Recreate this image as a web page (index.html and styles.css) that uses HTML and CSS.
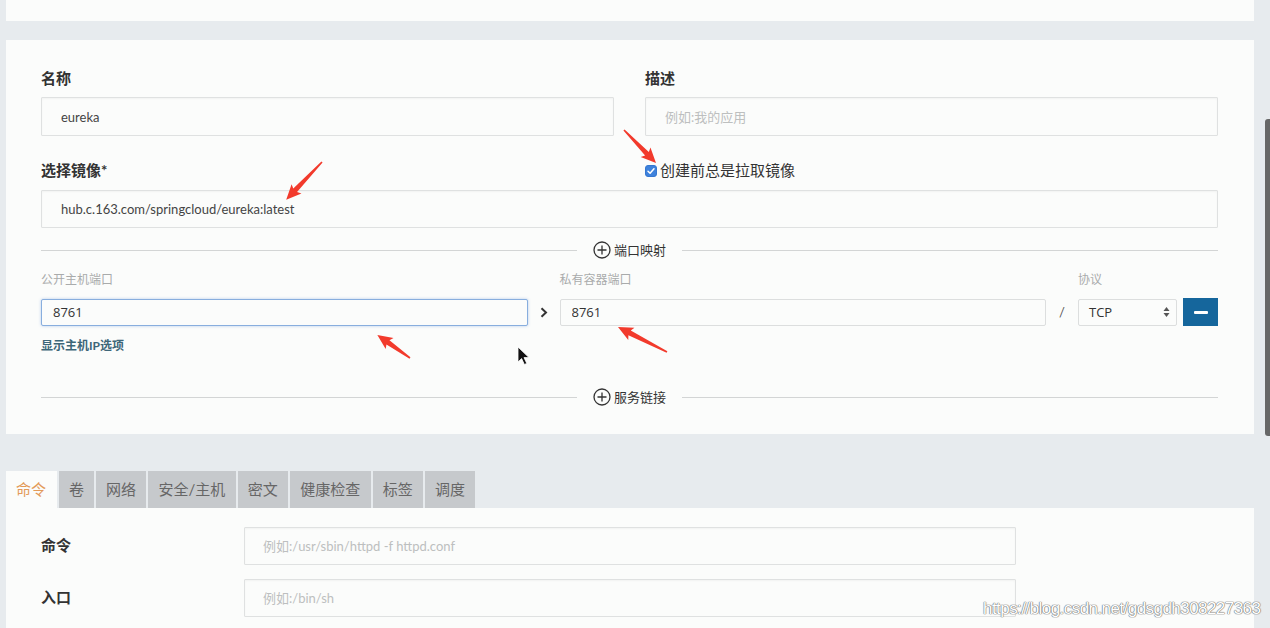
FILE: index.html
```html
<!DOCTYPE html>
<html lang="zh-CN">
<head>
  <meta charset="UTF-8" />
  <title>添加服务</title>
  <link rel="stylesheet" href="styles.css">
</head>
<body>
  <div class="top-card"></div>

  <!-- 基本信息 -->
  <div class="card">
    <div class="row">
      <div>
        <label class="field-label" for="nome">名称</label>
        <input class="text-input" id="nome" type="text" value="eureka">
      </div>
      <div>
        <label class="field-label" for="desc">描述</label>
        <input class="text-input" id="desc" type="text" placeholder="例如:我的应用">
      </div>
    </div>

    <div class="row row-image">
      <label class="field-label" for="imagem">选择镜像*</label>
      <label class="pull">
        <svg class="check" width="12" height="12" viewBox="0 0 12 12">
          <rect x="0.5" y="0.5" width="11" height="11" rx="2.5" fill="#3e82dc" stroke="#3577d0"/>
          <path d="M3 6.2 L5.1 8.3 L9 3.8" fill="none" stroke="#fff" stroke-width="1.5" stroke-linecap="round" stroke-linejoin="round"/>
        </svg>创建前总是拉取镜像
      </label>
    </div>
    <input class="text-input image-input" id="imagem" type="text" value="hub.c.163.com/springcloud/eureka:latest">

    <div class="divider">
      <span class="line"></span>
      <span class="divider-label">
        <svg width="18" height="18" viewBox="0 0 18 18">
          <circle cx="9" cy="9" r="8" fill="none" stroke="#333" stroke-width="1.3"/>
          <path d="M9 4.5 V13.5 M4.5 9 H13.5" stroke="#333" stroke-width="1.3"/>
        </svg>端口映射
      </span>
      <span class="line"></span>
    </div>

    <div class="ports">
      <span class="port-label">公开主机端口</span>
      <span></span>
      <span class="port-label">私有容器端口</span>
      <span></span>
      <span class="port-label">协议</span>
      <span></span>

      <input class="port-input focused" type="text" value="8761">
      <span class="sep">
        <svg width="8" height="11" viewBox="0 0 8 11"><path d="M1.5 1.2 L6 5.5 L1.5 9.8" fill="none" stroke="#333" stroke-width="2"/></svg>
      </span>
      <input class="port-input" type="text" value="8761">
      <span class="sep slash">/</span>
      <div class="select">
        <span>TCP</span>
        <svg width="7" height="12" viewBox="0 0 7 12">
          <path d="M3.5 1 L6.5 5 H0.5 Z M3.5 11 L6.5 7 H0.5 Z" fill="#555"/>
        </svg>
      </div>
      <button class="remove"><span></span></button>
    </div>

    <a class="host-ip" href="#">显示主机IP选项</a>

    <div class="divider divider-service">
      <span class="line"></span>
      <span class="divider-label">
        <svg width="18" height="18" viewBox="0 0 18 18">
          <circle cx="9" cy="9" r="8" fill="none" stroke="#333" stroke-width="1.3"/>
          <path d="M9 4.5 V13.5 M4.5 9 H13.5" stroke="#333" stroke-width="1.3"/>
        </svg>服务链接
      </span>
      <span class="line"></span>
    </div>
  </div>

  <!-- 标签页 -->
  <div class="tabs">
    <span class="tab active">命令</span>
    <span class="tab">卷</span>
    <span class="tab">网络</span>
    <span class="tab">安全/主机</span>
    <span class="tab">密文</span>
    <span class="tab">健康检查</span>
    <span class="tab">标签</span>
    <span class="tab">调度</span>
  </div>

  <div class="tab-panel">
    <label class="panel-label">命令</label>
    <input class="text-input panel-input" type="text" placeholder="例如:/usr/sbin/httpd -f httpd.conf">
    <label class="panel-label">入口</label>
    <input class="text-input panel-input" type="text" placeholder="例如:/bin/sh">
  </div>

  <div class="scrollbar"></div>

  <!-- 截图标注 -->
  <svg class="notes" width="1270" height="628" viewBox="0 0 1270 628">
    <g fill="#f23a2c">
      <polygon transform="translate(322 162) rotate(133.5)" points="0,-0.8 39,-2.6 37,-6.8 52,0 37,6.8 39,2.6 0,0.8"/>
      <polygon transform="translate(624 130) rotate(45.9)" points="0,-0.8 33,-2.6 31,-6.8 46,0 31,6.8 33,2.6 0,0.8"/>
      <polygon transform="translate(410 358) rotate(-144.7)" points="0,-0.8 27,-2.6 25,-6.8 40,0 25,6.8 27,2.6 0,0.8"/>
      <polygon transform="translate(667 352) rotate(-153)" points="0,-0.8 42,-2.6 40,-6.8 55,0 40,6.8 42,2.6 0,0.8"/>
    </g>
    <path transform="translate(518 347)" d="M0 0 V15 L3.6 11.6 L6.4 17.5 L8.8 16.4 L6 10.6 H11 Z" fill="#111" stroke="#fff" stroke-width="0.8"/>
  </svg>

  <div class="watermark">https://blog.csdn.net/gdsgdh308227363</div>
</body>
</html>
```

FILE: styles.css
```css
html, body { margin: 0; overflow: hidden; }
body {
  font-family: Lato, "Noto Sans CJK SC", sans-serif;
  background: #e7ebee;
  color: #333;
  padding: 0 16px 0 6px;
  height: 628px;
  position: relative;
}
.top-card { height: 21px; background: #fbfcfb; }
.card {
  margin-top: 19px;
  background: #fbfcfb;
  padding: 28px 36px 27px 35px;
}
.row {
  display: grid;
  grid-template-columns: 1fr 1fr;
  column-gap: 31px;
}
.field-label {
  display: block;
  font-size: 15px;
  font-weight: bold;
  line-height: 20px;
  margin-bottom: 9px;
}
.text-input {
  display: block;
  box-sizing: border-box;
  width: 100%;
  height: 39px;
  margin: 0;
  padding: 0 19px;
  border: 1px solid #dfe1e1;
  border-radius: 1px;
  background: #fbfcfb;
  box-shadow: inset 0 1px 2px rgba(0,0,0,0.04);
  font-family: Lato, "Noto Sans CJK SC", sans-serif;
  font-size: 13px;
  color: #444;
  outline: none;
}
.text-input::placeholder { color: #bdbfbf; }
.row-image { margin-top: 24px; }
.row-image .field-label { margin-bottom: 10px; }
.pull {
  display: flex;
  align-items: center;
  font-size: 15px;
  line-height: 20px;
  color: #333;
  height: 20px;
}
.pull .check { margin: 1px 3px 0 0; }
.image-input { height: 38px; }
.divider {
  display: flex;
  align-items: center;
  height: 20px;
  margin-top: 12px;
}
.divider .line { flex: 1; height: 1px; background: #d3d5d5; }
.divider-label {
  display: flex;
  align-items: center;
  padding: 0 16px;
  font-size: 13px;
  line-height: 18px;
  color: #333;
}
.divider-label svg { margin-right: 3px; }
.ports {
  display: grid;
  grid-template-columns: 1fr 32px 1fr 32px 99px 41px;
  grid-template-rows: 16px 28px;
  row-gap: 10px;
  align-items: center;
  margin-top: 12px;
}
.port-label { font-size: 12px; line-height: 16px; color: #a9abab; }
.port-input {
  box-sizing: border-box;
  width: 100%;
  height: 27px;
  margin: 0;
  padding: 0 11px;
  border: 1px solid #dcdede;
  border-radius: 2px;
  background: #fbfcfb;
  font-family: "Open Sans", sans-serif;
  font-size: 13px;
  color: #333;
  outline: none;
}
.port-input.focused {
  border-color: #88aede;
  box-shadow: 0 0 3px rgba(90,140,215,0.45);
}
.sep {
  display: flex;
  justify-content: center;
  align-items: center;
  color: #555;
  font-size: 13px;
}
.select {
  box-sizing: border-box;
  height: 27px;
  display: flex;
  align-items: center;
  justify-content: space-between;
  padding: 0 6px 0 10px;
  border: 1px solid #dcdede;
  border-radius: 2px;
  background: #fbfcfb;
  font-family: "Open Sans", sans-serif;
  font-size: 13px;
  color: #333;
}
.remove {
  justify-self: end;
  width: 35px;
  height: 28px;
  border: none;
  padding: 0;
  background: #15669c;
  display: flex;
  justify-content: center;
  align-items: center;
}
.remove span { width: 14px; height: 3px; background: #fff; border-radius: 1px; }
.host-ip {
  display: block;
  margin-top: 12px;
  font-size: 12px;
  line-height: 16px;
  font-weight: bold;
  color: #3d6678;
  text-decoration: none;
  width: max-content;
}
.divider-service { margin-top: 33px; }
.tabs {
  display: flex;
  gap: 2px;
  margin-top: 37px;
  height: 37px;
}
.tab {
  padding: 0 10px;
  line-height: 37px;
  font-size: 15px;
  color: #666;
  background: #c6c9cc;
}
.tab.active { background: #fbfcfb; color: #e39a58; padding-right: 11px; }
.tab:nth-child(4) { padding: 0 10.5px; }
.tab:nth-child(6) { padding: 0 10.5px; }
.tab-panel {
  background: #fbfcfb;
  height: 200px;
  box-sizing: border-box;
  padding: 19px 0 0 35px;
  display: grid;
  grid-template-columns: 203px 772px;
  grid-auto-rows: 38px;
  row-gap: 14px;
  align-items: center;
}
.panel-label { font-size: 15px; font-weight: bold; line-height: 20px; margin-top: -3px; }
.panel-input { height: 38px; padding: 0 18px; }
.scrollbar {
  position: absolute;
  right: 0;
  top: 119px;
  width: 5px;
  height: 317px;
  background: #676767;
  border-radius: 3px 0 0 3px;
}
.notes { position: absolute; top: 0; left: 0; pointer-events: none; }
.watermark {
  position: absolute;
  left: 983px;
  top: 599px;
  font-family: "Liberation Sans", sans-serif;
  font-size: 17px;
  letter-spacing: -0.55px;
  color: #fff;
  text-shadow: 0 0 1px #6e6e6e, 0 0 1px #6e6e6e, 0 0 1px #6e6e6e;
  white-space: nowrap;
}
```
